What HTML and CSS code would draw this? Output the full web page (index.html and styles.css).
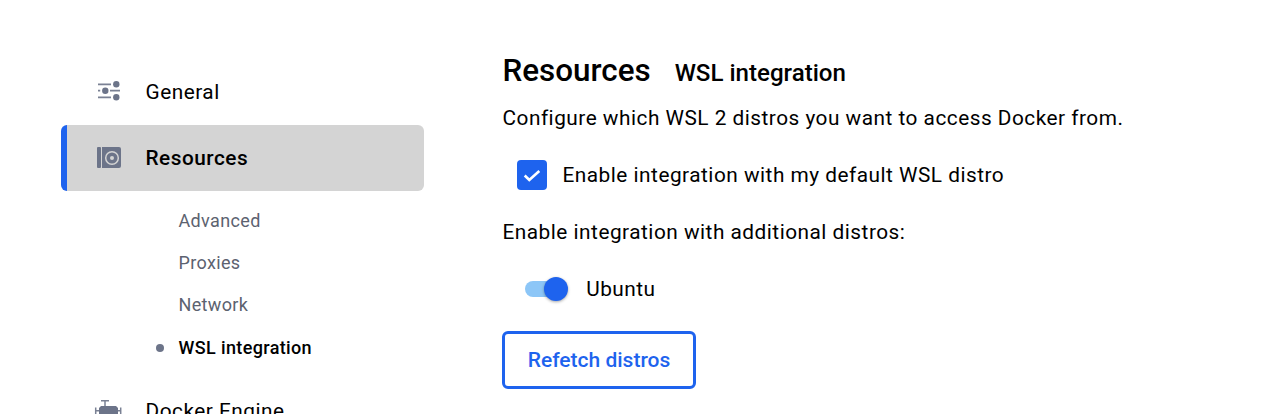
FILE: index.html
```html
<!DOCTYPE html>
<html lang="en">
<head>
<meta charset="utf-8">
<title>Resources - WSL integration</title>
<link rel="stylesheet" href="styles.css">
</head>
<body>
<div class="page">
  <nav class="sidebar">
    <div class="nav-item">
      <svg class="nav-icon" width="26" height="24" viewBox="0 0 26 24"><path d="M1 4.3h13M1 10.7h2.2M13 10.7h10M1 17.3h13" stroke="#7a8194" stroke-width="1.7" fill="none"/><circle cx="19.3" cy="4.3" r="3.2" fill="#6c7489"/><circle cx="8.3" cy="10.7" r="3.2" fill="#6c7489"/><circle cx="19.3" cy="17.3" r="3.2" fill="#6c7489"/></svg>
      <span>General</span>
    </div>
    <div class="nav-item active">
      <svg class="nav-icon" width="26" height="24" viewBox="0 0 26 24"><rect x="0" y="1" width="4" height="21" rx="1" fill="#6c7489"/><path d="M5 1h17a2 2 0 0 1 2 2v17a2 2 0 0 1-2 2H5z" fill="#6c7489"/><circle cx="15" cy="12" r="6.3" fill="none" stroke="#d4d4d4" stroke-width="1.5"/><circle cx="15" cy="12" r="2" fill="#d4d4d4"/></svg>
      <span>Resources</span>
    </div>
    <ul class="sub-list">
      <li class="sub-item">Advanced</li>
      <li class="sub-item">Proxies</li>
      <li class="sub-item">Network</li>
      <li class="sub-item current">WSL integration</li>
    </ul>
    <div class="nav-item engine">
      <svg class="nav-icon" width="26" height="24" viewBox="0 0 26 24"><path d="M4 1.7h8M8 1.7V7" stroke="#7a8194" stroke-width="1.5" fill="none"/><path d="M4 7h15l2 2v15H2V9z" fill="#6c7489"/><path d="M-1.3 8.5V15M23.7 8.5V15M-1.3 11.7H2M21 11.7h2.7" stroke="#7a8194" stroke-width="1.5" fill="none"/></svg>
      <span>Docker Engine</span>
    </div>
  </nav>
  <main class="content">
    <div class="heading">
      <h1>Resources</h1>
      <h2>WSL integration</h2>
    </div>
    <p class="intro">Configure which WSL 2 distros you want to access Docker from.</p>
    <div class="check-row">
      <span class="checkbox"><svg width="30" height="30" viewBox="0 0 30 30"><path d="M7.7 15.5l4.6 4.5 10-9" fill="none" stroke="#fff" stroke-width="2.6"/></svg></span>
      <span>Enable integration with my default WSL distro</span>
    </div>
    <p class="additional">Enable integration with additional distros:</p>
    <div class="switch-row">
      <span class="switch"><span class="thumb"></span></span>
      <span>Ubuntu</span>
    </div>
    <button class="refetch" type="button">Refetch distros</button>
  </main>
</div>
</body>
</html>
```

FILE: styles.css
```css
html, body {
  margin: 0;
  padding: 0;
  height: 100%;
  overflow: hidden;
  background: #fff;
}
.page {
  display: flex;
  height: 414px;
  overflow: hidden;
  font-family: Roboto, "Liberation Sans", sans-serif;
  color: #000;
  font-size: 20.8px;
  letter-spacing: 0.5px;
}
.sidebar {
  width: 363px;
  margin-left: 61px;
  padding-top: 59px;
  flex: none;
}
.nav-item {
  display: flex;
  align-items: center;
  height: 66px;
  padding-left: 36px;
  border-radius: 6px;
  box-sizing: border-box;
}
.nav-icon {
  width: 26px;
  flex: none;
  margin-right: 22.5px;
  overflow: visible;
}
.nav-item.active {
  background: #d4d4d4;
  border-left: 6px solid #1e63ee;
  padding-left: 30px;
  font-weight: 500;
}
.sub-list {
  list-style: none;
  margin: 9px 0 0;
  padding: 0 0 0 117.5px;
  font-size: 18px;
  letter-spacing: 0.35px;
  color: #5c6270;
}
.sub-item {
  height: 42px;
  line-height: 42px;
  position: relative;
}
.sub-item.current {
  margin-top: 1px;
  color: #000;
  font-weight: 500;
  letter-spacing: 0.37px;
}
.sub-item.current::before {
  content: "";
  position: absolute;
  left: -22.5px;
  top: 17px;
  width: 8px;
  height: 8px;
  border-radius: 50%;
  background: #6c7489;
}
.engine {
  margin-top: 9px;
}
.content {
  margin-left: 78.5px;
  padding-top: 51px;
  flex: 1;
}
.heading {
  display: flex;
  align-items: baseline;
  gap: 24px;
  letter-spacing: 0;
}
h1 {
  margin: 0;
  font-size: 31.4px;
  font-weight: 500;
  line-height: 40px;
}
h2 {
  margin: 0;
  font-size: 24.1px;
  font-weight: 500;
  line-height: 40px;
}
p {
  margin: 0;
}
.intro {
  margin-top: 10px;
  line-height: 30px;
}
.check-row {
  display: flex;
  align-items: center;
  height: 30px;
  margin-top: 27px;
  margin-left: 14.5px;
  gap: 15.5px;
}
.checkbox {
  display: flex;
  width: 30px;
  height: 30px;
  border-radius: 4px;
  background: #1e63ee;
}
.additional {
  margin-top: 27px;
  line-height: 30px;
}
.switch-row {
  display: flex;
  align-items: center;
  height: 30px;
  margin-top: 27px;
  margin-left: 22.5px;
  gap: 19.2px;
}
.switch {
  display: block;
  position: relative;
  width: 42px;
  height: 16px;
  border-radius: 8px;
  background: #8cc6f7;
}
.thumb {
  position: absolute;
  right: -1px;
  top: -4px;
  width: 24px;
  height: 24px;
  border-radius: 50%;
  background: #1e63ee;
  box-shadow: 0 1px 3px rgba(0, 0, 0, 0.35);
}
.refetch {
  display: block;
  margin-top: 27px;
  margin-left: -0.5px;
  width: 194px;
  height: 58px;
  border: 3px solid #1e63ee;
  border-radius: 6px;
  background: #fff;
  color: #1e63ee;
  font-family: inherit;
  font-size: 21px;
  font-weight: 500;
  letter-spacing: 0;
  padding: 0;
}
```
